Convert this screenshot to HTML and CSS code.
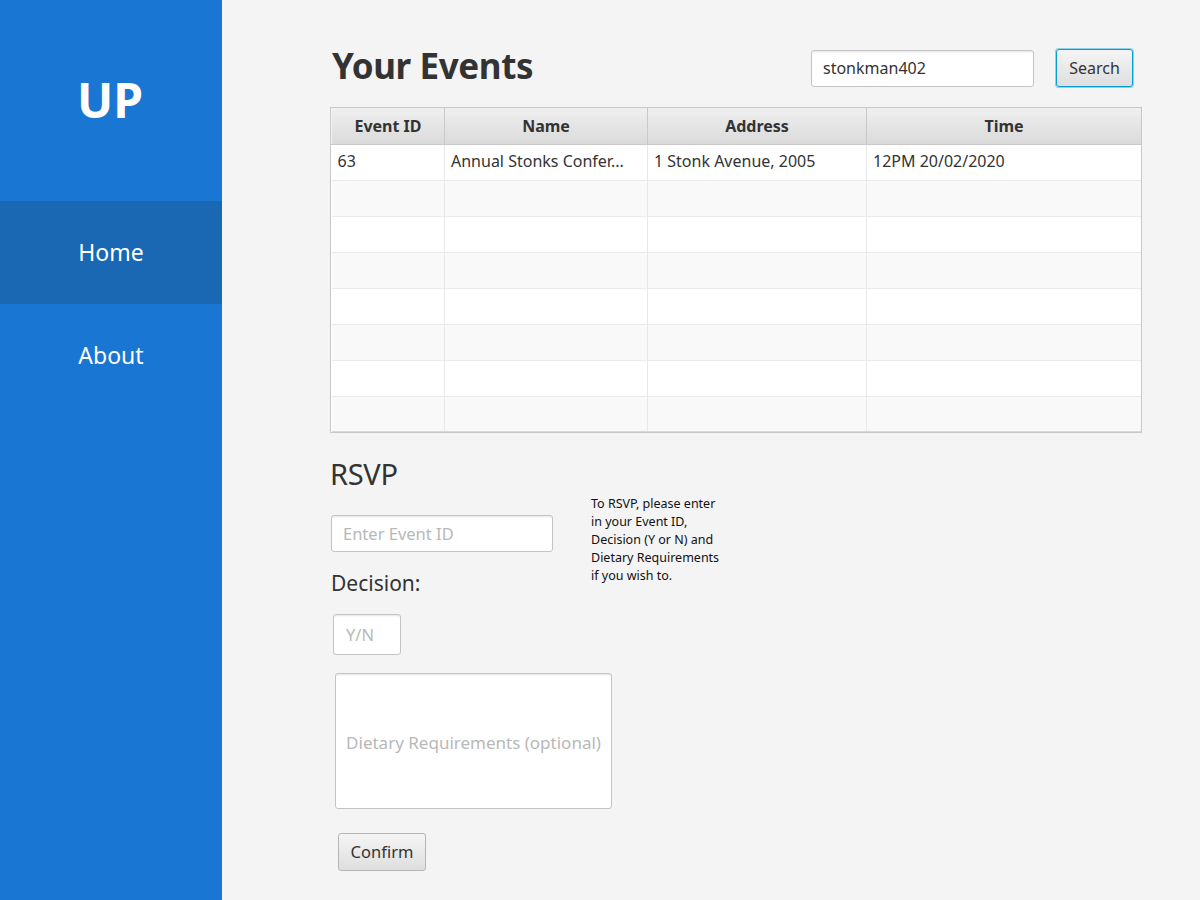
FILE: index.html
```html
<!DOCTYPE html>
<html>
<head>
<meta charset="utf-8">
<link rel="stylesheet" href="styles.css">
</head>
<body>
<div class="app">
  <aside class="sidebar">
    <div class="logo">UP</div>
    <nav class="nav">
      <div class="nav-item active">Home</div>
      <div class="nav-item">About</div>
    </nav>
  </aside>
  <main class="main">
    <div class="header">
      <h1 class="title">Your Events</h1>
      <div class="search">
        <input class="field search-field" type="text" value="stonkman402">
        <button class="btn btn-focus">Search</button>
      </div>
    </div>
    <div class="table-wrap">
      <table class="table">
        <colgroup>
          <col class="c1"><col class="c2"><col class="c3"><col class="c4">
        </colgroup>
        <thead>
          <tr><th>Event ID</th><th>Name</th><th>Address</th><th>Time</th></tr>
        </thead>
        <tbody>
          <tr><td>63</td><td>Annual Stonks Confer...</td><td>1 Stonk Avenue, 2005</td><td>12PM 20/02/2020</td></tr>
          <tr><td></td><td></td><td></td><td></td></tr>
          <tr><td></td><td></td><td></td><td></td></tr>
          <tr><td></td><td></td><td></td><td></td></tr>
          <tr><td></td><td></td><td></td><td></td></tr>
          <tr><td></td><td></td><td></td><td></td></tr>
          <tr><td></td><td></td><td></td><td></td></tr>
          <tr><td></td><td></td><td></td><td></td></tr>
        </tbody>
      </table>
    </div>
    <section class="rsvp">
      <div class="rsvp-form">
        <h2 class="rsvp-title">RSVP</h2>
        <input class="field event-field" type="text" placeholder="Enter Event ID">
        <div class="decision-label">Decision:</div>
        <input class="field yn-field" type="text" placeholder="Y/N">
        <textarea class="field diet-field" placeholder="Dietary Requirements (optional)"></textarea>
        <button class="btn confirm">Confirm</button>
      </div>
      <p class="help">To RSVP, please enter in your Event ID, Decision (Y or N) and Dietary Requirements if you wish to.</p>
    </section>
  </main>
</div>
</body>
</html>
```
FILE: styles.css
```css
* { box-sizing: border-box; }
html, body { margin: 0; padding: 0; }
body {
  font-family: "Noto Sans", "Open Sans", sans-serif;
  background: #f4f4f4;
  color: #333;
}
.app {
  display: flex;
  width: 1200px;
  height: 900px;
}
.sidebar {
  width: 222px;
  flex: none;
  background: #1976d2;
  color: #fff;
  display: flex;
  flex-direction: column;
}
.logo {
  height: 201px;
  display: flex;
  align-items: center;
  justify-content: center;
  font-size: 48px;
  font-weight: 700;
  padding-bottom: 2px;
  padding-right: 2px;
}
.nav { display: flex; flex-direction: column; }
.nav-item {
  height: 103px;
  display: flex;
  align-items: center;
  justify-content: center;
  font-size: 23px;
  padding-bottom: 2px;
}
.nav-item.active { background: #1a68b3; }
.main {
  flex: 1;
  padding: 48px 58px 0 108px;
}
.header {
  display: flex;
  align-items: center;
  justify-content: space-between;
  padding-right: 9px;
  height: 40px;
  margin-bottom: 19px;
}
.title {
  margin: 0 0 6px 0;
  font-size: 35px;
  font-weight: 700;
  color: #333;
  padding-left: 2px;
  letter-spacing: -0.4px;
}
.search { display: flex; align-items: center; gap: 22px; }
.field {
  font-family: inherit;
  background: #fff;
  border: 1px solid #c4c4c4;
  border-radius: 3px;
  color: #333;
  outline: none;
  box-shadow: inset 0 2px 2px -1px #e4e4e4;
}
.field::placeholder { color: #b8b8b8; }
.search-field {
  width: 223px;
  height: 37px;
  font-size: 16px;
  padding: 0 11px;
}
.btn {
  font-family: inherit;
  font-size: 16px;
  color: #333;
  border: 1px solid #b5b5b5;
  border-radius: 3px;
  background: linear-gradient(#f5f5f5, #dedede);
  padding: 0 11px;
  height: 37px;
}
.btn-focus {
  border: 1px solid #039ed3;
  box-shadow: 0 0 0 1px #8fd0ea;
  width: 77px;
  height: 38px;
}
.table-wrap {
  width: 812px;
  border: 1px solid #c8c8c8;
  background: #fff;
}
.table {
  width: 100%;
  border-collapse: collapse;
  table-layout: fixed;
  font-size: 16px;
}
.c1 { width: 113px; }
.c2 { width: 203px; }
.c3 { width: 219px; }
.c4 { width: auto; }
.table th {
  height: 36px;
  font-weight: 700;
  text-align: center;
  background: linear-gradient(#efefef, #dadada);
  border-right: 1px solid #c9c9c9;
  border-left: 1px solid #f4f4f4;
  border-bottom: 1px solid #c9c9c9;
  color: #333;
  padding: 0;
}
.table td {
  height: 36px;
  padding: 0 6px 2px;
  border-right: 1px solid #e8e8e8;
  border-bottom: 1px solid #ebebeb;
  white-space: nowrap;
  overflow: hidden;
  color: #333;
}
.table tbody tr:last-child td { height: 35px; }
.table tr > *:last-child { border-right: none; }
.table tbody tr:nth-child(even) td { background: #f9f9f9; }
.table tbody tr:last-child td { border-bottom: 1px solid #d8d8d8; }
.rsvp {
  display: flex;
  margin-top: 24px;
}
.rsvp-form {
  width: 261px;
  display: flex;
  flex-direction: column;
  align-items: flex-start;
}
.rsvp-title {
  margin: 0;
  font-size: 29px;
  font-weight: 400;
  line-height: 34px;
  height: 58px;
  letter-spacing: -0.3px;
}
.event-field {
  margin-left: 1px;
  width: 222px;
  height: 37px;
  font-size: 16.5px;
  padding: 0 11px;
}
.decision-label {
  font-size: 21px;
  margin-top: 16px;
  line-height: 30px;
  margin-left: 1px;
}
.yn-field {
  margin-top: 16px;
  margin-left: 3px;
  width: 68px;
  height: 41px;
  font-size: 16.5px;
  padding: 0 12px;
}
.diet-field {
  margin-top: 18px;
  margin-left: 5px;
  width: 277px;
  height: 136px;
  font-size: 17px;
  resize: none;
  padding: 57px 6px 0;
  text-align: center;
  overflow: hidden;
}
.confirm {
  margin-top: 24px;
  margin-left: 8px;
  width: 88px;
  height: 38px;
  font-size: 16.5px;
}
.help {
  margin: 38px 0 0 0;
  width: 135px;
  font-size: 12.5px;
  line-height: 18px;
  color: #111;
}
```
